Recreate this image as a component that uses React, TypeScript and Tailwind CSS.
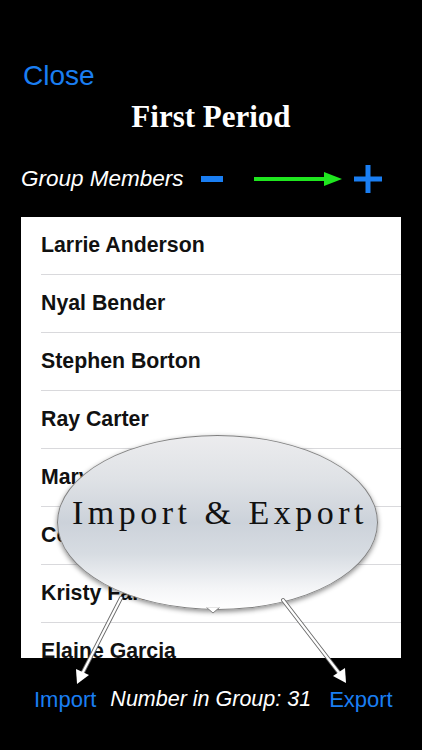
import React from "react";

const BLUE = "#1a7ef2";

const members = [
    "Larrie Anderson",
    "Nyal Bender",
    "Stephen Borton",
    "Ray Carter",
    "Mary Davis",
    "Cody Evans",
    "Kristy Farmer",
    "Elaine Garcia",
    "Tom Harris",
];

function GreenArrow() {
    return (
        <svg width="88" height="16" viewBox="0 0 88 16">
            <rect x="0" y="6" width="74" height="4" fill="#1fe61f" />
            <polygon points="70,1 88,8 70,15" fill="#1fe61f" />
        </svg>
    );
}

function Plus() {
    return (
        <svg width="28" height="28" viewBox="0 0 28 28">
            <rect x="11.5" y="0" width="5" height="28" fill={BLUE} />
            <rect x="0" y="11.5" width="28" height="5" fill={BLUE} />
        </svg>
    );
}

// callout lines from the bubble down to the two buttons
function Pointers() {
    return (
        <svg className="pointer-events-none absolute inset-0" width="422" height="750" viewBox="0 0 422 750">
            <g stroke="#6b6b6b" strokeWidth="4" strokeLinecap="round">
                <line x1="121" y1="598" x2="82" y2="674" />
                <line x1="283" y1="600" x2="340" y2="674" />
            </g>
            <g stroke="#ffffff" strokeWidth="2.2" strokeLinecap="round">
                <line x1="121" y1="598" x2="82" y2="674" />
                <line x1="283" y1="600" x2="340" y2="674" />
            </g>
            <polygon points="77,684 76,669 89,675" fill="#ffffff" />
            <polygon points="346,683 333,676 345,668" fill="#ffffff" />
        </svg>
    );
}

function Bubble() {
    return (
        <div className="absolute left-[57px] top-[435px] h-[175px] w-[321px]">
            <div className="flex h-full w-full items-center justify-center rounded-[50%] border border-[#808080] bg-[linear-gradient(180deg,#ececee_0%,#dfe2e6_25%,#ccd2da_50%,#d7dce2_68%,#f4f5f7_88%,#ffffff_100%)] shadow-[0_2px_5px_rgba(0,0,0,0.45)]">
                <span className="-mt-[20px] whitespace-nowrap pl-[5px] text-[34px] leading-none tracking-[4.5px] text-[#111] [font-family:'Liberation_Serif','Times_New_Roman',serif]">
                    Import &amp; Export
                </span>
            </div>
            <svg className="absolute left-[149px] top-[172px]" width="14" height="8" viewBox="0 0 14 8">
                <polygon points="0,0 7,6 14,0" fill="#ffffff" stroke="#808080" strokeWidth="1" />
                <rect x="0" y="-2" width="14" height="2.6" fill="#ffffff" />
            </svg>
        </div>
    );
}

export default function App() {
    return (
        <div className="relative h-[750px] w-[422px] overflow-hidden bg-black [font-family:'Liberation_Sans',Arial,sans-serif]">
            <div className="flex flex-col pt-[62px]">
                <div className="pl-[23px] text-[28px] leading-none" style={{ color: BLUE }}>
                    Close
                </div>
                <div className="mt-[11px] text-center text-[31px] font-bold leading-none text-white [font-family:'Liberation_Serif','Times_New_Roman',serif]">
                    First Period
                </div>

                <div className="mt-[32px] flex h-[30px] items-center pl-[21px]">
                    <span className="text-[22.5px] italic leading-none text-white">Group Members</span>
                    <div className="ml-[17px] h-[6px] w-[22px]" style={{ background: BLUE }} />
                    <div className="ml-[31px] flex items-center">
                        <GreenArrow />
                    </div>
                    <div className="ml-[12px] flex items-center">
                        <Plus />
                    </div>
                </div>

                <div className="ml-[21px] mt-[23px] h-[441px] w-[380px] overflow-hidden bg-white">
                    {members.map((name) => (
                        <div key={name} className="h-[58px] pl-[20px]">
                            <div className="flex h-full items-center border-b border-[#d9d9dc] pt-[1px] text-[21.3px] font-bold leading-none text-[#111]">
                                {name}
                            </div>
                        </div>
                    ))}
                </div>

                <div className="mt-[31px] flex items-center text-[22px] leading-none">
                    <span className="ml-[34px]" style={{ color: BLUE }}>Import</span>
                    <span className="ml-[14px] text-[21.5px] italic text-white">Number in Group: 31</span>
                    <span className="ml-[18px]" style={{ color: BLUE }}>Export</span>
                </div>
            </div>

            <Bubble />
            <Pointers />
        </div>
    );
}
